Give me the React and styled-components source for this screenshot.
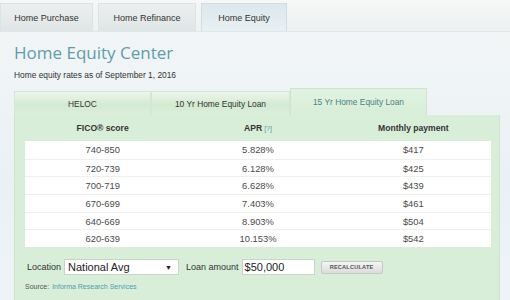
import React from "react";
import styled, { createGlobalStyle } from "styled-components";

const Global = createGlobalStyle`
  html, body { margin: 0; padding: 0; }
  body {
    width: 510px; height: 300px; overflow: hidden;
    background: #eef3f5;
    font-family: "Liberation Sans", Arial, sans-serif;
    color: #333;
  }
`;

const Page = styled.div`
  display: flex;
  flex-direction: column;
  width: 510px;
  height: 300px;
  background: linear-gradient(#f3f6f7, #eaf1f4 60%, #eef4f6);
`;

const TopNav = styled.nav`
  display: flex;
  align-items: flex-end;
  height: 31px;
  gap: 5px;
  background: linear-gradient(#f6f7f7, #edf1f1);
  border-bottom: 1px solid #e0e7e8;
`;

const TopTab = styled.div`
  display: flex;
  align-items: center;
  justify-content: center;
  height: 27px;
  width: ${p => p.$w}px;
  font-size: 9px;
  color: #333;
  background: ${p => (p.$active ? "linear-gradient(#dce8ed, #e8f0f3)" : "linear-gradient(#eceff0, #dfe5e6)")};
  border: 1px solid ${p => (p.$active ? "#d2dde2" : "#dde2e3")};
  border-bottom: none;
`;

const Header = styled.header`
  display: flex;
  flex-direction: column;
  padding: 9px 14px 0 14px;
`;

const Title = styled.h1`
  margin: 0;
  font-family: "Open Sans", "Noto Sans", sans-serif;
  font-weight: 400;
  font-size: 17px;
  line-height: 24px;
  color: #5f9cab;
`;

const Subtitle = styled.p`
  margin: 4px 0 0 0;
  font-size: 8.4px;
  line-height: 12px;
  color: #333;
`;

const Panel = styled.section`
  display: flex;
  flex-direction: column;
  margin: 7px 10px 0 14px;
`;

const SubTabs = styled.div`
  display: flex;
  align-items: flex-end;
  height: 27px;
`;

const SubTab = styled.div`
  display: flex;
  align-items: center;
  justify-content: center;
  width: ${p => p.$w}px;
  height: ${p => (p.$active ? "27px" : "24px")};
  font-size: 8.4px;
  color: ${p => (p.$active ? "#4a7f86" : "#333")};
  background: ${p =>
    p.$active
      ? "linear-gradient(#e2f2e2, #d7eed7)"
      : "linear-gradient(#eef6ec, #d3ead1 55%, #dcefdb)"};
  border: 1px solid ${p => (p.$active ? "#cfe4cf" : "#d5e6d4")};
  border-bottom: none;
  box-sizing: border-box;
`;

const Body = styled.div`
  display: flex;
  flex-direction: column;
  background: #d9eed9;
  padding: 0 8px 0 10px;
  height: 185px;
  border-left: 1px solid #cfe4cf;
  border-right: 1px solid #cfe4cf;
`;

const Grid = styled.div`
  display: grid;
  grid-template-columns: repeat(3, 1fr);
  align-items: center;
`;

const HeadRow = styled(Grid)`
  height: 26px;
  font-size: 8.6px;
  font-weight: bold;
  color: #333;
  text-align: center;
`;

const Help = styled.span`
  font-weight: normal;
  color: #5f9cab;
  font-size: 7px;
  margin-left: 2px;
`;

const Table = styled.div`
  display: flex;
  flex-direction: column;
  background: #ffffff;
`;

const Row = styled(Grid)`
  height: 17.7px;
  font-size: 9.4px;
  color: #4a4a4a;
  text-align: center;
  border-top: ${p => (p.$first ? "none" : "1px solid #eef0ee")};
  box-sizing: border-box;
`;

const Controls = styled.div`
  display: flex;
  align-items: center;
  height: 20px;
  margin-top: 10px;
  padding-left: 2px;
  font-size: 9px;
  color: #333;
`;

const Label = styled.span`
  margin-right: 3px;
`;

const Select = styled.div`
  display: flex;
  align-items: center;
  justify-content: space-between;
  width: 115px;
  height: 16px;
  box-sizing: border-box;
  padding: 0 6px 0 3px;
  background: #fff;
  border: 1px solid #c9d4c9;
  font-size: 11px;
  color: #222;
  margin-right: 7px;
`;

const Arrow = styled.span`
  font-size: 7px;
  color: #222;
`;

const Input = styled.div`
  display: flex;
  align-items: center;
  width: 73px;
  height: 16px;
  box-sizing: border-box;
  padding-left: 2px;
  background: #fff;
  border: 1px solid #c9d4c9;
  font-size: 11px;
  color: #222;
  margin-right: 6px;
`;

const Button = styled.button`
  height: 13px;
  width: 62px;
  padding: 0;
  border: 1px solid #c4c8c4;
  border-radius: 2px;
  background: linear-gradient(#f4f4f4, #dcdcdc);
  font-family: "Liberation Sans", Arial, sans-serif;
  font-size: 5.6px;
  font-weight: bold;
  color: #555;
  letter-spacing: 0.2px;
`;

const Source = styled.div`
  margin-top: 6px;
  font-size: 7px;
  color: #555;
`;

const SourceLink = styled.span`
  color: #4f9bb0;
  margin-left: 3px;
`;

const rows = [
  ["740-850", "5.828%", "$417"],
  ["720-739", "6.128%", "$425"],
  ["700-719", "6.628%", "$439"],
  ["670-699", "7.403%", "$461"],
  ["640-669", "8.903%", "$504"],
  ["620-639", "10.153%", "$542"],
];

export default function App() {
  return (
    <>
      <Global />
      <Page>
        <TopNav>
          <TopTab $w={91}>Home Purchase</TopTab>
          <TopTab $w={96}>Home Refinance</TopTab>
          <TopTab $w={84} $active>Home Equity</TopTab>
        </TopNav>
        <Header>
          <Title>Home Equity Center</Title>
          <Subtitle>Home equity rates as of September 1, 2016</Subtitle>
        </Header>
        <Panel>
          <SubTabs>
            <SubTab $w={137}>HELOC</SubTab>
            <SubTab $w={139}>10 Yr Home Equity Loan</SubTab>
            <SubTab $w={137} $active>15 Yr Home Equity Loan</SubTab>
          </SubTabs>
          <Body>
            <HeadRow>
              <span>FICO® score</span>
              <span>APR<Help>[?]</Help></span>
              <span>Monthly payment</span>
            </HeadRow>
            <Table>
              {rows.map((r, i) => (
                <Row key={r[0]} $first={i === 0}>
                  <span>{r[0]}</span>
                  <span>{r[1]}</span>
                  <span>{r[2]}</span>
                </Row>
              ))}
            </Table>
            <Controls>
              <Label>Location</Label>
              <Select>
                National Avg
                <Arrow>▼</Arrow>
              </Select>
              <Label>Loan amount</Label>
              <Input>$50,000</Input>
              <Button>RECALCULATE</Button>
            </Controls>
            <Source>
              Source:<SourceLink>Informa Research Services</SourceLink>
            </Source>
          </Body>
        </Panel>
      </Page>
    </>
  );
}
